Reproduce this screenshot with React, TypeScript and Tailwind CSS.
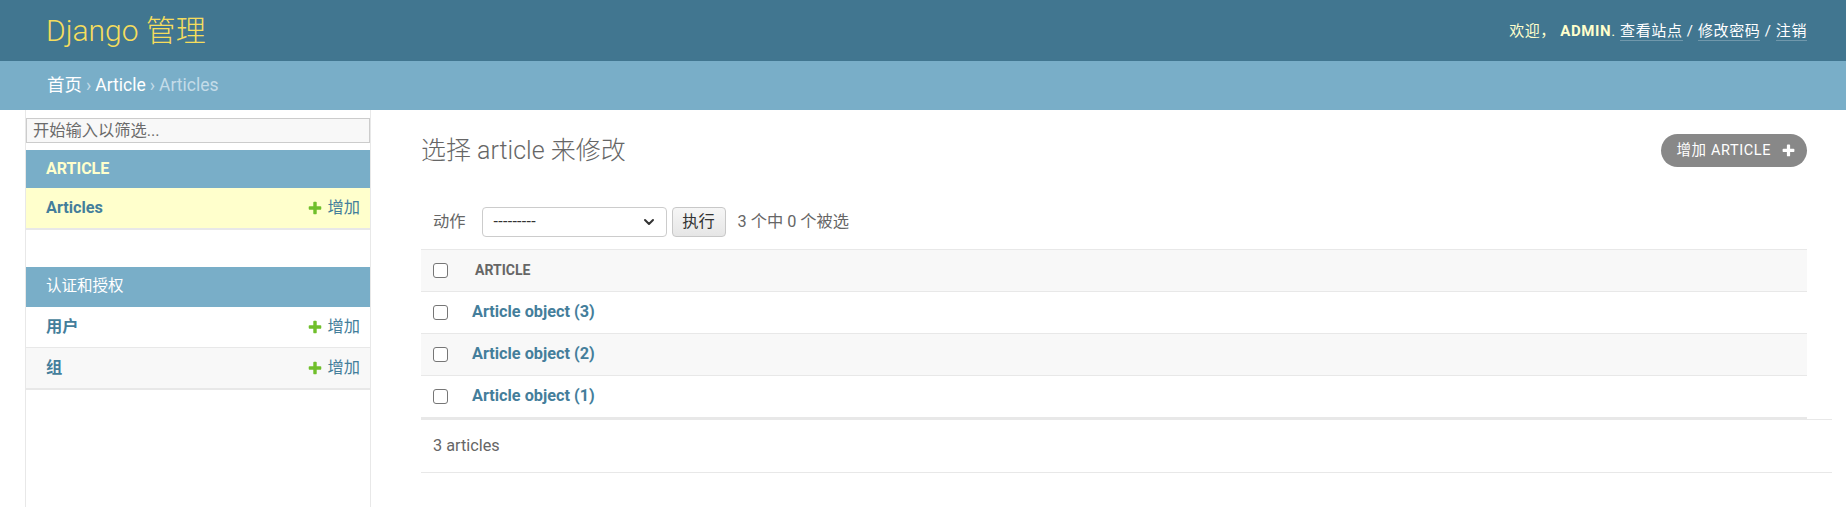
import { ChevronDown } from "lucide-react";

const PLUS_PATH =
  "M1600 796v192q0 40-28 68t-68 28h-416v416q0 40-28 68t-68 28h-192q-40 0-68-28t-28-68v-416h-416q-40 0-68-28t-28-68v-192q0-40 28-68t68-28h416v-416q0-40 28-68t68-28h192q40 0 68 28t28 68v416h416q40 0 68 28t28 68z";

function PlusIcon({ color, size }: { color: string; size: number }) {
  return (
    <svg width={size} height={size} viewBox="0 0 1792 1792" className="shrink-0">
      <path fill={color} d={PLUS_PATH} />
    </svg>
  );
}

function AddLink() {
  return (
    <span className="flex items-center gap-[5px] text-[#447e9b] text-[16.25px] font-normal">
      <PlusIcon color="#70bf2b" size={16} />
      增加
    </span>
  );
}

function Checkbox() {
  return (
    <span className="block w-[15px] h-[15px] rounded-[3px] border border-[#767676] bg-white" />
  );
}

const rows = ["Article object (3)", "Article object (2)", "Article object (1)"];

export default function App() {
  return (
    <div className="w-full h-[507px] flex flex-col bg-white overflow-hidden font-[Roboto,'Noto_Sans_CJK_SC',sans-serif]">
      {/* Header */}
      <header className="h-[61px] shrink-0 bg-[#417690] flex items-center justify-between pl-[46px] pr-[39px]">
        <div className="text-[30px] font-light text-[#f5dd5d] leading-none">Django 管理</div>
        <div className="text-[15px] tracking-[0.6px] uppercase text-[#ffc] pt-[1px]">
          欢迎，{" "}
          <strong className="font-bold">admin</strong>.{" "}
          <a className="text-white border-b border-white/25">查看站点</a>
          <span className="text-white"> / </span>
          <a className="text-white border-b border-white/25">修改密码</a>
          <span className="text-white"> / </span>
          <a className="text-white border-b border-white/25">注销</a>
        </div>
      </header>

      {/* Breadcrumbs */}
      <div className="h-[49px] shrink-0 bg-[#79aec8] flex items-center pl-[47px] text-[17.5px] text-[#c4dce8]">
        <a className="text-white">首页</a>
        <span className="mx-[4px]">›</span>
        <a className="text-white">Article</a>
        <span className="mx-[4px]">›</span>
        <span>Articles</span>
      </div>

      <div className="flex flex-1 min-h-0">
        {/* Toggle strip */}
        <div className="w-[26px] shrink-0 border-r border-[#e8e8e8]" />

        {/* Sidebar */}
        <nav className="w-[345px] shrink-0 border-r border-[#e8e8e8]">
          <input
            placeholder="开始输入以筛选..."
            className="mt-[8px] block w-full h-[25px] border border-[#ccc] bg-[#f8f8f8] px-[6px] text-[16.25px] text-[#333] placeholder:text-[#6b6b6b] outline-none"
          />

          <div className="mt-[7px] mb-[37px]">
            <div className="h-[38px] bg-[#79aec8] flex items-center pl-[20px] text-[16px] font-bold uppercase text-[#ffc]">
              Article
            </div>
            <div className="h-[42px] bg-[#ffc] border-b-2 border-[#e8e8e8] flex items-center justify-between pl-[20px] pr-[10px]">
              <span className="text-[16.25px] font-bold text-[#447e9b]">Articles</span>
              <AddLink />
            </div>
          </div>

          <div>
            <div className="h-[40px] bg-[#79aec8] flex items-center pl-[20px] text-[15.5px] text-white">
              认证和授权
            </div>
            <div className="h-[41px] bg-white border-b border-[#e8e8e8] flex items-center justify-between pl-[20px] pr-[10px]">
              <span className="text-[16.25px] font-bold text-[#447e9b]">用户</span>
              <AddLink />
            </div>
            <div className="h-[42px] bg-[#f8f8f8] border-b-2 border-[#e8e8e8] flex items-center justify-between pl-[20px] pr-[10px]">
              <span className="text-[16.25px] font-bold text-[#447e9b]">组</span>
              <AddLink />
            </div>
          </div>
        </nav>

        {/* Main content */}
        <main className="flex-1 pl-[50px] pr-[14px] pt-[24px]">
          <div className="mr-[25px]">
            <div className="flex items-start justify-between h-[33px]">
              <h1 className="text-[25px] font-light text-[#666] leading-[33px]">选择 article 来修改</h1>
              <a className="h-[33px] rounded-[17px] bg-[#888] flex items-center gap-[10px] pl-[15px] pr-[11px] text-[14.5px] tracking-[0.6px] uppercase text-white">
                增加 article
                <PlusIcon color="#ffffff" size={15} />
              </a>
            </div>

            {/* Actions */}
            <div className="mt-[30px] pt-[10px] pb-[12px] px-[12px] flex items-center text-[16.25px] text-[#666]">
              <span>动作</span>
              <div className="ml-[16px] w-[185px] h-[30px] rounded-[4px] border border-[#ccc] bg-white flex items-center justify-between pl-[11px] pr-[9px] text-[#333]">
                <span className="text-[16px] tracking-[0.3px]">---------</span>
                <ChevronDown size={16} strokeWidth={3} color="#333" />
              </div>
              <button className="ml-[5px] w-[54px] h-[30px] rounded-[4px] border border-[#c8c8c8] bg-gradient-to-b from-[#f6f6f6] to-[#e6e6e6] text-[#333] text-[16.25px]">
                执行
              </button>
              <span className="ml-[12px]">3 个中 0 个被选</span>
            </div>

            {/* Results table */}
            <div className="border-b-2 border-[#e8e8e8]">
              <div className="h-[43px] bg-[#f8f8f8] border-y border-[#e8e8e8] flex items-center">
                <div className="w-[51px] pl-[12px]">
                  <Checkbox />
                </div>
                <span className="ml-[3px] text-[14px] font-bold uppercase text-[#666]">Article</span>
              </div>
              {rows.map((r, i) => (
                <div
                  key={r}
                  className={`flex items-center ${i === 2 ? "h-[41px]" : "h-[42px] border-b border-[#e8e8e8]"} ${
                    i === 1 ? "bg-[#f8f8f8]" : "bg-white"
                  }`}
                >
                  <div className="w-[51px] pl-[12px]">
                    <Checkbox />
                  </div>
                  <a className="text-[16.25px] font-bold text-[#447e9b]">{r}</a>
                </div>
              ))}
            </div>
          </div>

          {/* Paginator */}
          <div className="h-[54px] border-y border-[#e8e8e8] flex items-center pl-[12px] text-[16.25px] text-[#666]">
            3 articles
          </div>
        </main>
      </div>
    </div>
  );
}
